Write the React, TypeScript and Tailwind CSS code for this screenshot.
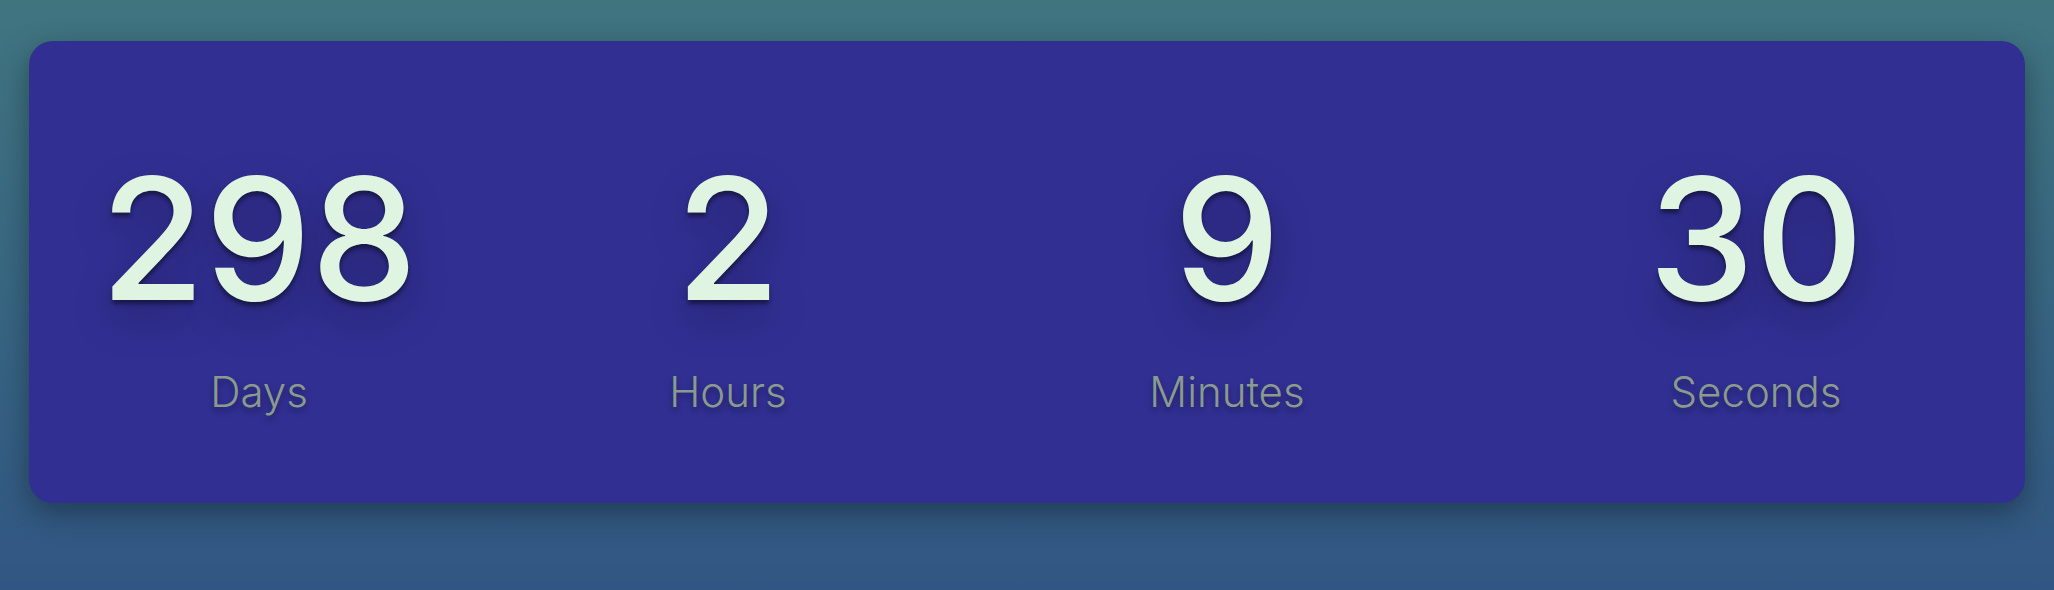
import React from "react";

const items = [
  { value: "298", label: "Days" },
  { value: "2", label: "Hours" },
  { value: "9", label: "Minutes" },
  { value: "30", label: "Seconds" },
];

export default function App() {
  return (
    <div
      className="h-[590px] w-full bg-gradient-to-b from-[#407580] to-[#315683] px-[29px] pt-[41px]"
      style={{ fontFamily: "Inter, 'Noto Sans', sans-serif" }}
    >
      <div className="grid h-[462px] w-full grid-cols-[460px_478px_520px_1fr] rounded-[24px] bg-[#312f92] pt-[113px] shadow-[0_10px_30px_rgba(0,0,0,0.35)]">
        {items.map((it) => (
          <div key={it.label} className="flex flex-col items-center">
            <div className="text-[169px] font-medium leading-none text-[#dff5e1] [text-shadow:0_4px_4px_rgba(0,0,0,0.45),0_16px_40px_rgba(0,0,0,0.25)]">
              {it.value}
            </div>
            <div className="mt-[48px] text-[42px] font-light leading-none text-[#8a9a8e] [text-shadow:0_4px_6px_rgba(0,0,0,0.35)]">
              {it.label}
            </div>
          </div>
        ))}
      </div>
    </div>
  );
}
